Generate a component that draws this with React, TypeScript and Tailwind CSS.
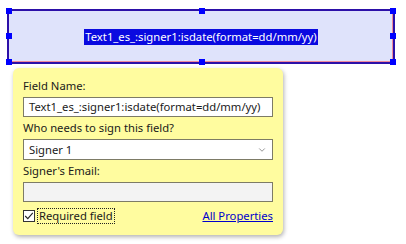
import { ChevronDown } from "lucide-react";

const font = { fontFamily: '"Noto Sans", "Open Sans", sans-serif' };

function Handle({ pos }: { pos: string }) {
  return <span className={`absolute w-[6px] h-[6px] bg-[#0000ff] ${pos}`} />;
}

export default function App() {
  return (
    <div className="w-[406px] h-[244px] bg-white overflow-hidden text-[11.25px] text-[#1a1a1a]" style={font}>
      <div className="pt-[9px] pl-[7px]">
        <div className="relative w-[388px] h-[55px] border-2 border-[#2c10a8] bg-[#dfe3fb]">
          <div className="absolute inset-0 border border-[#f08a9a] border-t-0 border-l-0" />
          <div className="h-full flex items-center justify-center">
            <span className="bg-[#0a0ae0] text-white leading-[16px] px-[1px]">Text1_es_:signer1:isdate(format=dd/mm/yy)</span>
          </div>
          <Handle pos="-left-[3px] -top-[3px]" />
          <Handle pos="left-[190px] -top-[3px]" />
          <Handle pos="-right-[3px] -top-[3px]" />
          <Handle pos="-left-[3px] top-[22px]" />
          <Handle pos="-right-[3px] top-[22px]" />
          <Handle pos="-left-[3px] -bottom-[3px]" />
          <Handle pos="left-[190px] -bottom-[3px]" />
          <Handle pos="-right-[3px] -bottom-[3px]" />
        </div>
      </div>

      <div className="ml-[13px] mt-[4px] w-[270px] h-[167px] rounded-[6px] bg-[#fffc9f] shadow-[1px_2px_4px_rgba(0,0,0,0.3)] px-[10px] pt-[10px] flex flex-col">
        <div className="leading-[16px]">Field Name:</div>
        <div className="mt-[3px] h-[20px] border border-[#7d7b66] bg-white flex items-center px-[5px] leading-none">
          Text1_es_:signer1:isdate(format=dd/mm/yy)
        </div>
        <div className="mt-[3px] leading-[16px]">Who needs to sign this field?</div>
        <div className="mt-[3px] h-[21px] border border-[#7d7b66] bg-white flex items-center justify-between pl-[5px] pr-[5px] leading-none">
          <span>Signer 1</span>
          <ChevronDown className="w-[10px] h-[10px] text-[#555]" strokeWidth={1.5} />
        </div>
        <div className="mt-[3px] leading-[16px]">Signer's Email:</div>
        <div className="mt-[3px] h-[20px] border border-[#7d7b66] bg-[#f3f3f3]" />
        <div className="mt-[6px] flex items-center justify-between">
          <div className="flex items-center">
            <span className="w-[12px] h-[12px] border border-[#333] bg-white flex items-center justify-center">
              <svg width="10" height="10" viewBox="0 0 10 10">
                <path d="M1.2 5 L3.8 7.6 L8.8 1.8" fill="none" stroke="#222" strokeWidth="1.1" />
              </svg>
            </span>
            <span className="ml-[2px] border border-dotted border-[#222] leading-[14px] px-[1px]">Required field</span>
          </div>
          <span className="text-[#0000cc] underline leading-[14px]">All Properties</span>
        </div>
      </div>
    </div>
  );
}
